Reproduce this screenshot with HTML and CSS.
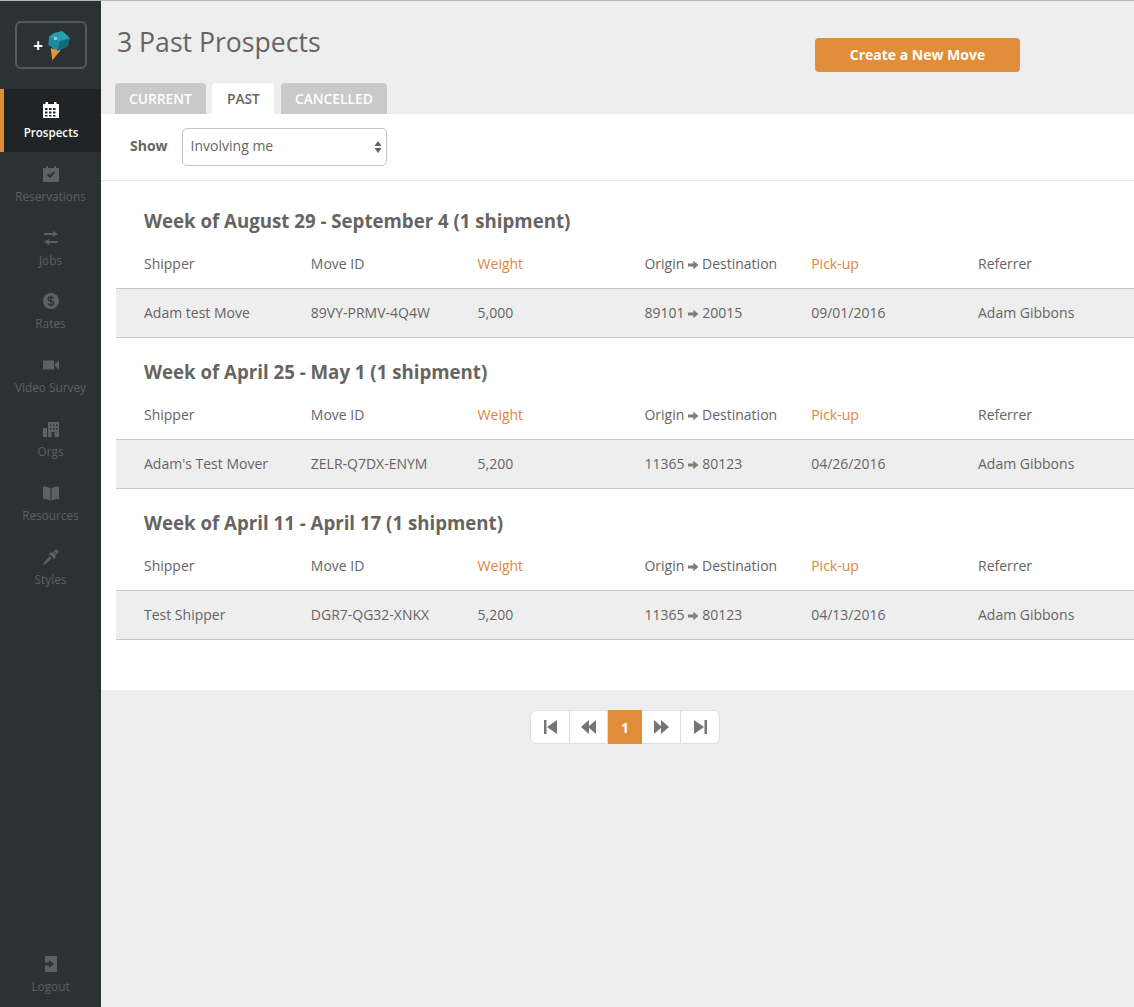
FILE: index.html
```html
<!DOCTYPE html>
<html lang="en">
<head>
<meta charset="utf-8">
<title>3 Past Prospects</title>
<link rel="stylesheet" href="styles.css">
</head>
<body>
<div class="app">
  <aside class="sidebar">
    <div class="logo-wrap">
      <a class="logo-btn">
        <span class="logo-plus">+</span>
        <svg class="logo-mark" width="22" height="30" viewBox="0 0 22 30">
          <path d="M2.700 17.300L12.700 19 4.300 29.500Z" fill="#e8962f"/>
          <path d="M6 2.300L14.300 0 22 7.300 19.300 15.700 9.300 19.700 .3 14 1 5.700Z" fill="#1a8c9e"/>
          <path d="M1 5.700L6 2.300 14.300 0 22 7.300 12 10Z" fill="#25a0b0"/>
          <path d="M12 10L22 7.300 19.300 15.700 9.300 19.700Z" fill="#116a78"/>
          <rect x="6" y="6" width="3" height="3" fill="#8fcbd3"/>
        </svg>
      </a>
    </div>
    <nav class="nav">
      <a class="nav-item active">
        <svg class="nav-icon" viewBox="0 0 16 16"><path fill-rule="evenodd" d="M0 2h2.500V0h2.500v2h6V0h2.500v2H16v14H0zM2 6v2h2.500V6zm4 0v2h2.500V6zm4 0v2h2.500V6zM2 9.500v2h2.500v-2zm4 0v2h2.500v-2zm4 0v2h2.500v-2zM2 13v1.500h2.500V13zm4 0v1.500h2.500V13zm4 0v1.500h2.500V13z"/></svg>
        <span>Prospects</span>
      </a>
      <a class="nav-item">
        <svg class="nav-icon" viewBox="0 0 16 16"><path fill-rule="evenodd" d="M0 2h3V0h2v2h6V0h2v2h3v14H0zM4 9l1.500-1.500L7 9l3.500-3.500L12 7l-5 5z"/></svg>
        <span>Reservations</span>
      </a>
      <a class="nav-item">
        <svg class="nav-icon" viewBox="0 0 16 16"><path d="M10 1l5 3-5 3V5H1V3h9zM6 9v2h9v2H6v2l-5-3z"/></svg>
        <span>Jobs</span>
      </a>
      <a class="nav-item">
        <svg class="nav-icon" viewBox="0 0 16 16"><circle cx="8" cy="8" r="8"/><path d="M11 5.500C10.500 4.500 9.500 4 8 4 6.300 4 5.200 4.800 5.200 6 5.200 8.800 10.800 7.200 10.800 10 10.800 11.200 9.700 12 8 12 6.500 12 5.500 11.500 5 10.500M8 2.800v10.400" fill="none" stroke="#2c3133" stroke-width="1.400"/></svg>
        <span>Rates</span>
      </a>
      <a class="nav-item">
        <svg class="nav-icon" viewBox="0 0 16 16"><path d="M0 3.500h11v9H0zM12 7l4-3.500v9L12 9z"/></svg>
        <span>Video Survey</span>
      </a>
      <a class="nav-item">
        <svg class="nav-icon" viewBox="0 0 16 16"><path fill-rule="evenodd" d="M5 1h11v15H5zM7 3.500V5h1.500V3.500zm3 0V5h1.500V3.500zM7 7v1.500h1.500V7zm3 0v1.500h1.500V7zm3-3.500V5h1.500V3.500zM13 7v1.500h1.500V7zM8.500 11v5h3v-5zM0 7h4v9H0z"/></svg>
        <span>Orgs</span>
      </a>
      <a class="nav-item">
        <svg class="nav-icon" viewBox="0 0 16 16"><path d="M0 1.500C3 1.500 6 2 7.500 3.500V16C6 14.500 3 14 0 14zM16 1.500C13 1.500 10 2 8.500 3.500V16C10 14.500 13 14 16 14z"/></svg>
        <span>Resources</span>
      </a>
      <a class="nav-item">
        <svg class="nav-icon" viewBox="0 0 16 16"><path d="M0 16L1 13.500 6.500 7.500 8.500 9.500 2.500 15ZM6 4.500L11.500 10 13 8.500 11.800 7.300 13.200 5.800 10.200 2.800 8.700 4.200 7.500 3ZM10.800 2.200L13 0 16 3 13.800 5.200Z"/></svg>
        <span>Styles</span>
      </a>
    </nav>
    <a class="nav-item logout">
      <svg class="nav-icon" viewBox="0 0 16 16"><path fill-rule="evenodd" d="M2 0h12v16H2zM2 6.500h4V4l5 4-5 4V9.500H2z"/></svg>
      <span>Logout</span>
    </a>
  </aside>

  <main class="main">
    <header class="page-head">
      <h1 class="page-title">3 Past Prospects</h1>
      <a class="cta">Create a New Move</a>
    </header>
    <div class="tabs">
      <a class="tab">CURRENT</a>
      <a class="tab tab-active">PAST</a>
      <a class="tab">CANCELLED</a>
    </div>
    <section class="panel">
      <div class="filter">
        <span class="filter-label">Show</span>
        <div class="select">
          <span>Involving me</span>
          <svg class="select-arrows" width="8" height="12" viewBox="0 0 8 12"><path d="M4 0l3.500 5H.5zM4 12L.5 7h7z"/></svg>
        </div>
      </div>

      <div class="week">
        <h2 class="week-title">Week of August 29 - September 4 (1 shipment)</h2>
        <div class="cols">
          <span>Shipper</span><span>Move ID</span><span class="sort">Weight</span>
          <span>Origin <svg class="arrow" viewBox="0 0 11 10"><path d="M0 3.500h5.500V0.500L11 5 5.500 9.500V6.500H0z"/></svg> Destination</span>
          <span class="sort">Pick-up</span><span>Referrer</span>
        </div>
        <div class="row">
          <span>Adam test Move</span><span>89VY-PRMV-4Q4W</span><span>5,000</span>
          <span>89101 <svg class="arrow" viewBox="0 0 11 10"><path d="M0 3.500h5.500V0.500L11 5 5.500 9.500V6.500H0z"/></svg> 20015</span>
          <span>09/01/2016</span><span>Adam Gibbons</span>
        </div>
      </div>

      <div class="week">
        <h2 class="week-title">Week of April 25 - May 1 (1 shipment)</h2>
        <div class="cols">
          <span>Shipper</span><span>Move ID</span><span class="sort">Weight</span>
          <span>Origin <svg class="arrow" viewBox="0 0 11 10"><path d="M0 3.500h5.500V0.500L11 5 5.500 9.500V6.500H0z"/></svg> Destination</span>
          <span class="sort">Pick-up</span><span>Referrer</span>
        </div>
        <div class="row">
          <span>Adam's Test Mover</span><span>ZELR-Q7DX-ENYM</span><span>5,200</span>
          <span>11365 <svg class="arrow" viewBox="0 0 11 10"><path d="M0 3.500h5.500V0.500L11 5 5.500 9.500V6.500H0z"/></svg> 80123</span>
          <span>04/26/2016</span><span>Adam Gibbons</span>
        </div>
      </div>

      <div class="week">
        <h2 class="week-title">Week of April 11 - April 17 (1 shipment)</h2>
        <div class="cols">
          <span>Shipper</span><span>Move ID</span><span class="sort">Weight</span>
          <span>Origin <svg class="arrow" viewBox="0 0 11 10"><path d="M0 3.500h5.500V0.500L11 5 5.500 9.500V6.500H0z"/></svg> Destination</span>
          <span class="sort">Pick-up</span><span>Referrer</span>
        </div>
        <div class="row">
          <span>Test Shipper</span><span>DGR7-QG32-XNKX</span><span>5,200</span>
          <span>11365 <svg class="arrow" viewBox="0 0 11 10"><path d="M0 3.500h5.500V0.500L11 5 5.500 9.500V6.500H0z"/></svg> 80123</span>
          <span>04/13/2016</span><span>Adam Gibbons</span>
        </div>
      </div>
    </section>

    <nav class="pager">
      <a class="page page-first"><svg class="page-icon" viewBox="0 0 13 14"><path d="M0 0h2.500v14H0zM13 0v14L3 7z"/></svg></a>
      <a class="page page-prev"><svg class="page-icon page-icon-wide" viewBox="0 0 15 14"><path d="M8 0v14L0 7zM15 0v14L7 7z"/></svg></a>
      <a class="page page-current">1</a>
      <a class="page page-next"><svg class="page-icon page-icon-wide" viewBox="0 0 15 14"><path d="M0 0v14l8-7zM7 0v14l8-7z"/></svg></a>
      <a class="page page-last"><svg class="page-icon" viewBox="0 0 13 14"><path d="M10.500 0H13v14h-2.500zM0 0v14l10-7z"/></svg></a>
    </nav>
  </main>
</div>
</body>
</html>
```
FILE: styles.css
```css
* { box-sizing: border-box; }
html, body { margin: 0; height: 100%; }
body {
  font-family: "Open Sans", "Liberation Sans", sans-serif;
  font-size: 14px;
  color: #666462;
  background: #eee;
  border-top: 1px solid #b5b5b5;
  overflow: hidden;
}
.app { display: flex; height: 1006px; }

/* Sidebar */
.sidebar {
  width: 101px;
  flex: none;
  background: #2c3133;
  display: flex;
  flex-direction: column;
}
.logo-wrap { height: 88px; padding: 20px 14px 0 15px; }
.logo-btn {
  height: 48px;
  border: 2px solid #54595b;
  border-radius: 6px;
  display: flex;
  align-items: center;
  justify-content: center;
  gap: 5px;
  padding-left: 1px;
}
.logo-plus { color: #fff; font-weight: 700; font-size: 17px; line-height: 1; }
.logo-mark { display: block; margin-top: 2px; }
.nav { display: flex; flex-direction: column; }
.nav-item {
  height: 63.8px;
  display: flex;
  flex-direction: column;
  align-items: center;
  padding-top: 13px;
  color: #5d6163;
  font-size: 11.8px;
  line-height: 16px;
}
.nav-item span { margin-top: 6px; }
.nav-icon { width: 16px; height: 16px; fill: #5d6163; display: block; }
.nav-item.active {
  height: 63px;
  margin-bottom: 0.8px;
  background: #212426;
  border-left: 4px solid #e08e36;
  padding-right: 3px;
  color: #fff;
  font-weight: 600;
  font-size: 11.6px;
}
.nav-item.active span { margin-top: 7px; }
.nav-item.active .nav-icon { fill: #fff; }
.nav-item.logout { margin-top: auto; height: 51px; padding-top: 0; flex: none; }

/* Main */
.main { flex: 1; min-width: 0; display: flex; flex-direction: column; }
.page-head {
  height: 82px;
  display: flex;
  align-items: flex-start;
  justify-content: space-between;
  padding: 0 114px 0 16px;
}
.page-title {
  margin: 22px 0 0;
  font-size: 26.6px;
  line-height: 38px;
  font-weight: 400;
  color: #666462;
}
.cta {
  width: 205px;
  height: 34px;
  margin-top: 37px;
  padding-bottom: 2px;
  background: #e08e3a;
  color: #fff;
  border-radius: 4px;
  font-weight: 700;
  font-size: 14px;
  display: flex;
  align-items: center;
  justify-content: center;
}
.tabs { display: flex; gap: 6.5px; padding-left: 14px; height: 31px; }
.tab {
  background: #c9c9c9;
  color: #fff;
  border-radius: 4px 4px 0 0;
  font-weight: 600;
  font-size: 13.8px;
  line-height: 31px;
  padding: 0 14px;
}
.tab-active { background: #fff; color: #666462; padding: 0 14.5px; }

.panel { background: #fff; height: 576px; }
.filter {
  height: 67px;
  display: flex;
  align-items: flex-start;
  gap: 14px;
  padding: 14px 0 0 29px;
  border-bottom: 1px solid #e9e9e9;
}
.filter-label { font-weight: 700; line-height: 35px; }
.select {
  width: 205px;
  height: 38px;
  border: 1px solid #c4c4c4;
  border-radius: 5px;
  padding: 0 4px 3px 8px;
  display: flex;
  align-items: center;
  justify-content: space-between;
}
.select-arrows { fill: #666462; margin-top: 3px; }

.week { padding: 22px 0 0 15px; }
.filter + .week { padding-top: 28px; }
.week-title {
  margin: 0;
  padding-left: 28px;
  font-size: 18.66px;
  line-height: 24px;
  font-weight: 700;
  color: #666462;
}
.cols, .row {
  display: grid;
  grid-template-columns: repeat(6, 166.8px);
  padding-left: 28px;
  align-items: center;
  white-space: nowrap;
}
.cols { height: 55px; padding-top: 5px; }
.row {
  height: 50px;
  padding-bottom: 2px;
  background: #eee;
  border-top: 1px solid #c8c8c8;
  border-bottom: 1px solid #c8c8c8;
}
.sort { color: #e0853d; }
.arrow { width: 10.5px; height: 10px; fill: #7f7d7a; vertical-align: -1px; }

/* Pager */
.pager {
  align-self: center;
  display: flex;
  height: 34px;
  margin: 20px 0 0 15px;
  background: #fff;
  border: 1px solid #dedede;
  border-radius: 6px;
}
.page {
  display: flex;
  align-items: center;
  justify-content: center;
  border-right: 1px solid #dedede;
}
.page-first { width: 39px; }
.page-prev { width: 38px; }
.page-next { width: 39px; }
.page-last { width: 38px; border-right: 0; }
.page-current {
  width: 34px;
  margin: -1px 0;
  border-right: 0;
  background: #e08e3a;
  color: #fff;
  font-weight: 700;
}
.page-icon { width: 13px; height: 14px; fill: #757575; }
.page-icon-wide { width: 15px; }
```
